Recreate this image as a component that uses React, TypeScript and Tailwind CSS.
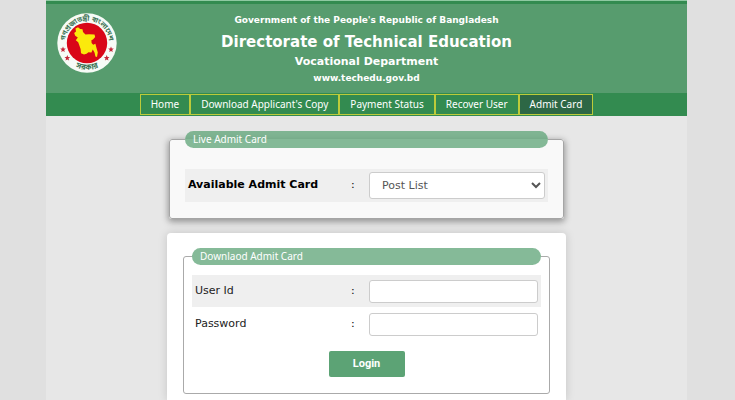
import type { ReactNode } from "react";

const sans = "font-['DejaVu_Sans',Verdana,sans-serif]";

const navItems = ["Home", "Download Applicant's Copy", "Payment Status", "Recover User", "Admit Card"];

const star = "M0,-2.9 L0.8,-1 L2.8,-0.9 L1.2,0.5 L1.8,2.5 L0,1.4 L-1.8,2.5 L-1.2,0.5 L-2.8,-0.9 L-0.8,-1 Z";

function Seal() {
  return (
    <svg viewBox="0 0 60 60" className="size-[60px]" role="img" aria-label="Government seal of Bangladesh">
      <defs>
        <path id="arcTop" d="M 8.4 34 A 22 22 0 1 1 51.6 34" />
        <path id="arcBottom" d="M 9 46.7 A 26.9 26.9 0 0 0 51 46.7" />
      </defs>
      <circle cx="30" cy="30" r="29.7" fill="#f7fbf6" />
      <circle cx="30" cy="30" r="20.2" fill="#d90718" />
      <path
        fill="#fbe90c"
        d="M18.5 15.5 L21 14.2 L23.2 16 L25.5 16.2 L26 19 L28.5 21.4 L32 21.2 L37.5 21.6 L38.2 24 L36 26.5 L34.4 27.2 L34.6 30 L36.2 31.8 L38.4 30.8 L39.5 35 L40.8 39.5 L40 44 L38.4 43.6 L37.6 39.8 L35.8 36.6 L34.4 39.5 L31.5 39.2 L29.5 40.8 L27 41.5 L24 40.2 L23.6 36 L22.2 32 L21.2 29.2 L18.8 27.2 L20.8 24.6 L18.2 22.8 L17.2 20 L19 18.4 Z"
      />
      <g fill="#c42738">
        <path d={star} transform="translate(6 36.5)" />
        <path d={star} transform="translate(10.3 45)" />
        <path d={star} transform="translate(54 36.5)" />
        <path d={star} transform="translate(49.7 45)" />
      </g>
      <g fill="#3d7355" className="font-['Noto_Sans_Bengali','Noto_Sans',sans-serif]">
        <text textAnchor="middle" className="text-[7px]">
          <textPath href="#arcTop" startOffset="50%">গণপ্রজাতন্ত্রী বাংলাদেশ</textPath>
        </text>
        <text textAnchor="middle" className="text-[8px]">
          <textPath href="#arcBottom" startOffset="50%">সরকার</textPath>
        </text>
      </g>
    </svg>
  );
}

function Legend({ children }: { children: ReactNode }) {
  return (
    <legend className="h-[17px] w-full rounded-full bg-[#5ca375]/75 px-2 font-['Noto_Sans',sans-serif] text-[10px] leading-[17px] text-white">
      {children}
    </legend>
  );
}

function Field({ id, label, type }: { id: string; label: string; type: string }) {
  return (
    <div className="flex h-8 items-center px-[3px] odd:bg-[#efefef]">
      <label htmlFor={id} className="grow text-[11px] text-[#222]">
        {label}
      </label>
      <span className="w-[18px] text-[11px]">:</span>
      <input
        id={id}
        type={type}
        className="h-[23px] w-[169px] rounded-[3px] border border-[#ccc] bg-white px-2 text-[11px] outline-none"
      />
    </div>
  );
}

export default function App() {
  return (
    <div className={`min-h-screen bg-[#e0e0e0] pr-[48px] pl-[46px] ${sans}`}>
      <div className="min-h-screen bg-[#e7e7e7]">
        <header className="relative border-t border-[#8fc9a2] bg-[#579c6e] text-center font-bold text-white">
          <div className="h-[3px] bg-[#338b50]" />
          <div className="absolute top-[12px] left-[11px]">
            <Seal />
          </div>
          <div className="h-[89px] pt-2">
            <p className="text-[9px] leading-4">Government of the People's Republic of Bangladesh</p>
            <h1 className="text-[15px] leading-7">Directorate of Technical Education</h1>
            <p className="text-[11px] leading-3">Vocational Department</p>
            <p className="text-[9px] leading-5">www.techedu.gov.bd</p>
          </div>
        </header>
        <nav className="flex h-[23px] items-center justify-center bg-[#338b50]">
          {navItems.map((item) => (
            <a
              key={item}
              href="#"
              aria-current={item === "Admit Card" ? "page" : undefined}
              className="h-[21px] border border-[#bccb3a] px-[10px] font-['Noto_Sans',sans-serif] text-[10px] leading-[19px] whitespace-nowrap text-white aria-[current=page]:bg-[#2d6745]"
            >
              {item}
            </a>
          ))}
        </nav>

        <main className="mx-auto w-full max-w-[399px] pt-[15px]">
          <fieldset className="mx-[2px] rounded-[3px] border border-[#a5a5a5] bg-[#f9f9f9] px-[15px] pb-4 shadow-[0_2px_6px_1px_rgba(0,0,0,0.35)]">
            <Legend>Live Admit Card</Legend>
            <div className="mt-[21px] flex h-[33px] items-center bg-[#efefef] px-[3px]">
              <label htmlFor="post" className="grow text-[11px] font-bold text-black">
                Available Admit Card
              </label>
              <span className="w-[18px] text-[11px]">:</span>
              <select
                id="post"
                className="h-[27px] w-[176px] rounded-[3px] border border-[#ccc] bg-white px-2 text-[11px] text-[#555]"
              >
                <option>Post List</option>
              </select>
            </div>
          </fieldset>

          <form
            className="mt-[14px] rounded-t-[4px] bg-white px-4 pt-[15px] pb-[6px] shadow-[0_0_10px_rgba(0,0,0,0.15)]"
            onSubmit={(event) => event.preventDefault()}
          >
            <fieldset className="rounded-[3px] border border-[#aaa] px-[8px] pb-4">
              <Legend>Downlaod Admit Card</Legend>
              <div className="mt-[10px] flex flex-col gap-px">
                <Field id="user" label="User Id" type="text" />
                <Field id="password" label="Password" type="password" />
              </div>
              <button
                type="submit"
                className="mx-auto mt-[11px] block h-[26px] w-[76px] rounded-[2px] bg-[#5ca375] font-[Roboto,sans-serif] text-[11px] font-bold text-white"
              >
                Login
              </button>
            </fieldset>
          </form>
        </main>
      </div>
    </div>
  );
}
